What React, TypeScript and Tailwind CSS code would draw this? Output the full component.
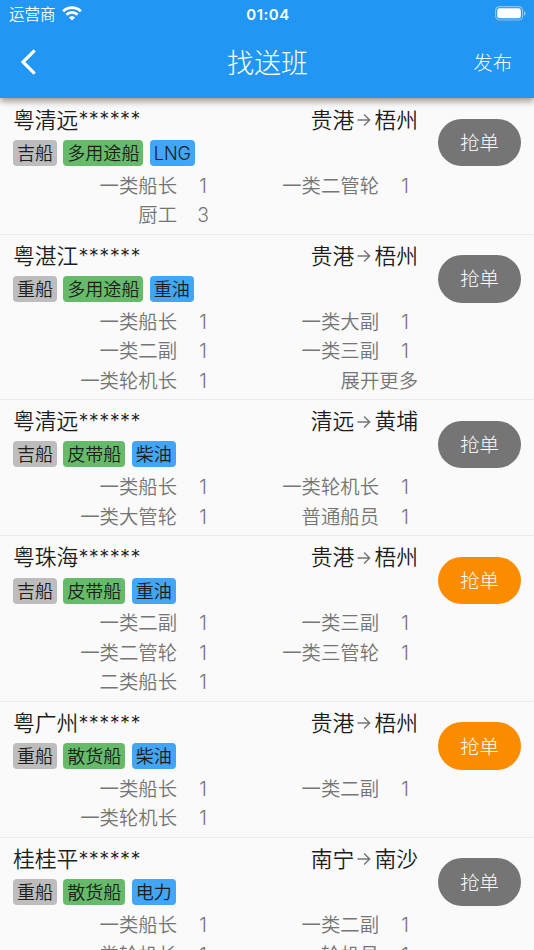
import React from "react";

type Role = [name: string, count?: number];

type Ship = {
  name: string;
  from: string;
  to: string;
  load: string;
  kind: string;
  fuel: string;
  open?: boolean;
  roles: Role[];
};

const ships: Ship[] = [
  {
    name: "粤清远",
    from: "贵港",
    to: "梧州",
    load: "吉船",
    kind: "多用途船",
    fuel: "LNG",
    roles: [
      ["一类船长", 1],
      ["一类二管轮", 1],
      ["厨工", 3],
    ],
  },
  {
    name: "粤湛江",
    from: "贵港",
    to: "梧州",
    load: "重船",
    kind: "多用途船",
    fuel: "重油",
    roles: [
      ["一类船长", 1],
      ["一类大副", 1],
      ["一类二副", 1],
      ["一类三副", 1],
      ["一类轮机长", 1],
      ["展开更多"],
    ],
  },
  {
    name: "粤清远",
    from: "清远",
    to: "黄埔",
    load: "吉船",
    kind: "皮带船",
    fuel: "柴油",
    roles: [
      ["一类船长", 1],
      ["一类轮机长", 1],
      ["一类大管轮", 1],
      ["普通船员", 1],
    ],
  },
  {
    name: "粤珠海",
    from: "贵港",
    to: "梧州",
    load: "吉船",
    kind: "皮带船",
    fuel: "重油",
    open: true,
    roles: [
      ["一类二副", 1],
      ["一类三副", 1],
      ["一类二管轮", 1],
      ["一类三管轮", 1],
      ["二类船长", 1],
    ],
  },
  {
    name: "粤广州",
    from: "贵港",
    to: "梧州",
    load: "重船",
    kind: "散货船",
    fuel: "柴油",
    open: true,
    roles: [
      ["一类船长", 1],
      ["一类二副", 1],
      ["一类轮机长", 1],
    ],
  },
  {
    name: "桂桂平",
    from: "南宁",
    to: "南沙",
    load: "重船",
    kind: "散货船",
    fuel: "电力",
    roles: [
      ["一类船长", 1],
      ["一类二副", 1],
      ["一类轮机长", 1],
      ["轮机员", 1],
    ],
  },
];

const StatusBar = () => (
  <div className="grid h-[27px] grid-cols-3 items-center pr-[7px] pl-[9px]">
    <div className="flex items-center gap-[6px]">
      <span className="pt-px text-[15.5px] leading-[27px] font-[350]">运营商</span>
      <svg width="20" height="15" viewBox="0 0 20 15" className="mt-[-1px]">
        <g fill="none" stroke="#fff" strokeWidth="2.9">
          <path d="M1.1 5.2C6.2.4 13.8.4 18.9 5.2" />
          <path d="M4.4 8.7c3.3-3 7.9-3 11.2 0" />
        </g>
        <path d="M10 14.6 6.9 11.4c1.8-1.5 4.4-1.5 6.2 0z" fill="#fff" />
      </svg>
    </div>
    <div className="text-center text-[15px] leading-[27px] font-semibold tracking-[0.5px]">
      01:04
    </div>
    <svg width="32" height="15" viewBox="0 0 32 15" className="mt-[-1px] justify-self-end">
      <rect x="0.6" y="0.6" width="27" height="13.4" rx="4" fill="none" stroke="#fff" strokeOpacity="0.45" strokeWidth="1.2" />
      <rect x="2.2" y="2.3" width="23.7" height="10" rx="2.4" fill="#fff" />
      <path d="M29.1 5v4.8c2-.8 2-4 0-4.8z" fill="#fff" fillOpacity="0.5" />
    </svg>
  </div>
);

const Header = () => (
  <header className="relative z-10 h-[98px] bg-[#2196f3] text-white shadow-[0_3px_7px_rgba(0,0,0,0.42)]">
    <StatusBar />
    <div className="grid h-[71px] grid-cols-3 items-center pr-[22px] pl-[20px]">
      <svg width="17" height="26" viewBox="0 0 17 26" className="mt-[-1px]">
        <path d="M14.7 1.4 3 13l11.7 11.6" fill="none" stroke="#fff" strokeWidth="3.2" />
      </svg>
      <h1 className="pt-[3px] pl-[3px] text-center text-[27px] leading-[36px] font-light">找送班</h1>
      <button className="justify-self-end pt-px text-[19.35px] leading-[28px] font-light">发布</button>
    </div>
  </header>
);

const ShipItem = ({ ship }: { ship: Ship }) => (
  <li className="flex border-b border-[#ebebeb] pb-[4.2px] font-[350]">
    <div className="w-[418px] shrink-0">
      <div className="flex h-[41px] items-center justify-between pt-[2px] pl-[13px] text-[21.8px] text-[#1c1c1c]">
        <div className="flex items-center">
          <span>{ship.name}</span>
          <span className="pb-px text-[20px] tracking-[0.4px]">******</span>
        </div>
        <div className="flex items-center">
          <span>{ship.from}</span>
          <svg width="20" height="20" viewBox="0 0 20 20" fill="none" stroke="#757575" strokeWidth="1.4">
            <path d="M3.5 10h12.2M10.1 4.4l5.6 5.6-5.6 5.6" />
          </svg>
          <span>{ship.to}</span>
        </div>
      </div>
      <div className="mt-[0.3px] flex h-[26px] gap-[6.5px] pl-[13px] text-[18.06px] leading-[27px] text-[#1c1c1c]">
        <span className="rounded-[4px] bg-[#bdbdbd] px-[3.9px]">{ship.load}</span>
        <span className="rounded-[4px] bg-[#66bb6a] px-[3.9px]">{ship.kind}</span>
        <span className="rounded-[4px] bg-[#42a5f5] px-[3.9px]">{ship.fuel}</span>
      </div>
      <div className="mt-[4.9px] grid grid-cols-[216px_202px] text-[19.35px] leading-[31.6px] text-[#757575]">
        {ship.roles.map(([name, count]) => (
          <div key={name} className="flex h-[29.4px] justify-end">
            <span>{name}</span>
            {count && <span className="w-[39px] pl-[13px] text-center leading-[30.6px]">{count}</span>}
          </div>
        ))}
      </div>
    </div>
    <button
      className={`mt-[20.5px] ml-[20.3px] h-[47.6px] w-[82.4px] rounded-full pt-[2px] text-[19.35px] font-light text-white ${
        ship.open ? "bg-[#fb8c00]" : "bg-[#757575]"
      }`}
    >
      抢单
    </button>
  </li>
);

export default function App() {
  return (
    <div className="h-[950px] w-[534px] overflow-hidden bg-[#fafafa] font-[Inter,'Noto_Sans_CJK_SC',sans-serif]">
      <Header />
      <ul className="pt-[0.4px]">
        {ships.map((ship, i) => (
          <ShipItem key={i} ship={ship} />
        ))}
      </ul>
    </div>
  );
}
